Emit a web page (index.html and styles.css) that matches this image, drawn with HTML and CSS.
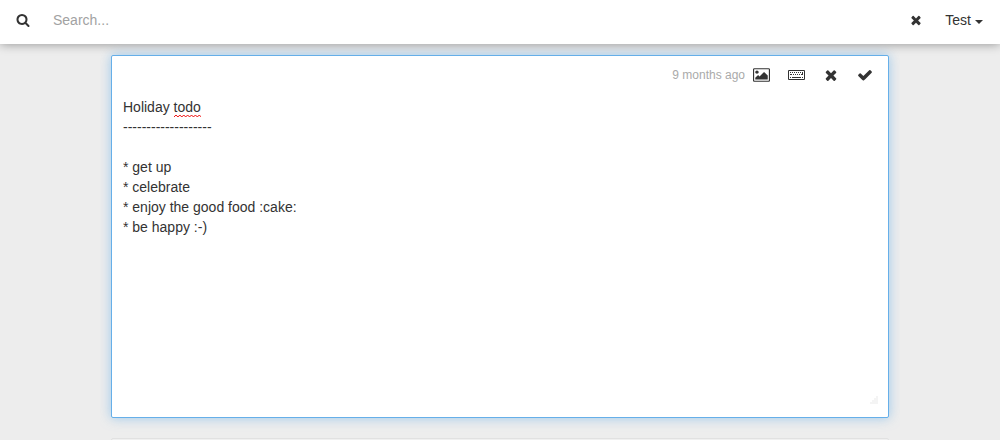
FILE: index.html
```html
<!DOCTYPE html>
<html lang="en">
<head>
    <meta charset="UTF-8">
    <meta name="viewport" content="width=device-width, initial-scale=1.0">
    <title>Notes</title>
    <link rel="stylesheet" href="styles.css">
</head>
<body>
    <header class="navbar">
        <label class="search-label" for="search" aria-label="Search">
            <svg class="icon icon-small" viewBox="0 0 1792 1792"><path d="M1216 832q0-185-131.5-316.5t-316.5-131.5-316.5 131.5-131.5 316.5 131.5 316.5 316.5 131.5 316.5-131.5 131.5-316.5zm512 832q0 52-38 90t-90 38q-54 0-90-38l-343-342q-179 124-399 124-143 0-273.5-55.5t-225-150-150-225-55.5-273.5 55.5-273.5 150-225 225-150 273.5-55.5 273.5 55.5 225 150 150 225 55.5 273.5q0 220-124 399l343 343q37 37 37 90z"/></svg>
        </label>
        <input class="search-input" type="text" id="search" placeholder="Search...">
        <button class="icon-button" type="button" id="clearSearch" aria-label="Clear search">
            <svg class="icon icon-small" viewBox="0 0 1792 1792"><path d="M1490 1322q0 40-28 68l-136 136q-28 28-68 28t-68-28l-294-294-294 294q-28 28-68 28t-68-28l-136-136q-28-28-28-68t28-68l294-294-294-294q-28-28-28-68t28-68l136-136q28-28 68-28t68 28l294 294 294-294q28-28 68-28t68 28l136 136q28 28 28 68t-28 68l-294 294 294 294q28 28 28 68z"/></svg>
        </button>
        <button class="user-menu" type="button" aria-haspopup="true">Test<span class="caret"></span></button>
    </header>

    <main class="notes">
        <article class="note note-editing">
            <div class="toolbar">
                <span class="note-date">9 months ago</span>
                <button class="icon-button" type="button" aria-label="Insert image">
                    <svg class="icon icon-wide" viewBox="-64 0 1920 1792"><path d="M576 576q0 80-56 136t-136 56-136-56-56-136 56-136 136-56 136 56 56 136zm1024 384v448h-1408v-192l320-320 160 160 512-512zm96-704h-1600q-13 0-22.5 9.5t-9.5 22.5v1216q0 13 9.5 22.5t22.5 9.5h1600q13 0 22.5-9.5t9.5-22.5v-1216q0-13-9.5-22.5t-22.5-9.5zm160 32v1216q0 66-47 113t-113 47h-1600q-66 0-113-47t-47-113v-1216q0-66 47-113t113-47h1600q66 0 113 47t47 113z"/></svg>
                </button>
                <button class="icon-button" type="button" aria-label="Keyboard shortcuts">
                    <svg class="icon icon-wide" viewBox="0 0 17 16">
                        <path fill-rule="evenodd" d="M1 3h15a1 1 0 0 1 1 1v8a1 1 0 0 1-1 1h-15a1 1 0 0 1-1-1v-8a1 1 0 0 1 1-1zM1 4v8h15v-8z"/>
                        <path d="M2 5h1v1h-1zM4 5h1v1h-1zM6 5h1v1h-1zM8 5h1v1h-1zM10 5h1v1h-1zM12 5h1v1h-1zM14 5h1v3h-2v-1h1zM2 7h2v1h-2zM5 7h1v1h-1zM7 7h1v1h-1zM9 7h1v1h-1zM11 7h1v1h-1zM2 10h1v1h-1zM4 10h9v1h-9zM14 10h1v1h-1z"/>
                    </svg>
                </button>
                <button class="icon-button" type="button" aria-label="Cancel">
                    <svg class="icon" viewBox="0 0 1792 1792"><path d="M1490 1322q0 40-28 68l-136 136q-28 28-68 28t-68-28l-294-294-294 294q-28 28-68 28t-68-28l-136-136q-28-28-28-68t28-68l294-294-294-294q-28-28-28-68t28-68l136-136q28-28 68-28t68 28l294 294 294-294q28-28 68-28t68 28l136 136q28 28 28 68t-28 68l-294 294 294 294q28 28 28 68z"/></svg>
                </button>
                <button class="icon-button" type="button" aria-label="Save">
                    <svg class="icon" viewBox="0 0 1792 1792"><path d="M1671 566q0 40-28 68l-724 724-136 136q-28 28-68 28t-68-28l-136-136-362-362q-28-28-28-68t28-68l136-136q28-28 68-28t68 28l294 295 656-657q28-28 68-28t68 28l136 136q28 28 28 68z"/></svg>
                </button>
            </div>
            <div class="editor">
                <!-- Spelling marks, laid under the text -->
                <div class="spelling" id="spelling" aria-hidden="true">Holiday <span class="misspelled">todo<svg class="squiggle" viewBox="0 0 28 4"><path d="M0 3L2 1L4 3L6 1L8 3L10 1L12 3L14 1L16 3L18 1L20 3L22 1L24 3L26 1L28 3"/></svg></span></div>
                <textarea class="editor-text" id="note" rows="15" spellcheck="false" aria-label="Note text">Holiday todo
-------------------

* get up
* celebrate
* enjoy the good food :cake:
* be happy :-)</textarea>
                <svg class="grip" viewBox="0 0 8 8"><path d="M8 0v8h-8v-2h2v-2h2v-2h2v-2z"/></svg>
            </div>
        </article>
        <article class="note note-next"></article>
    </main>

    <script>
        const search = document.getElementById('search');
        const note = document.getElementById('note');

        document.getElementById('clearSearch').addEventListener('click', () => {
            search.value = '';
            search.focus();
        });

        // The marks no longer fit once the text is edited
        note.addEventListener('input', () => {
            document.getElementById('spelling').style.display = 'none';
        });
    </script>
</body>
</html>
```
FILE: styles.css
```css
/* Base */
* {
    box-sizing: border-box;
}
body {
    margin: 0;
    min-height: 100vh;
    overflow-x: hidden;
    background: #ededed;
    color: #333;
    font-family: "Liberation Sans", Arial, sans-serif;
    font-size: 14px;
    line-height: 20px;
}
button,
input,
textarea {
    margin: 0;
    padding: 0;
    border: none;
    outline: none;
    background: transparent;
    color: inherit;
    font: inherit;
}
button {
    cursor: pointer;
}

/* Icons */
.icon {
    display: block;
    width: 16px;
    height: 16px;
    fill: #333;
}
.icon-small {
    width: 14px;
    height: 14px;
}
.icon-wide {
    width: 17px;
}

/* Navbar */
.navbar {
    position: relative;
    display: flex;
    align-items: center;
    height: 44px;
    padding: 0 17px 4px 16px;
    background: #fff;
    box-shadow: 0 0 10px rgba(0, 0, 0, 0.4);
}
.search-input {
    flex: 1;
    min-width: 0;
    margin-left: 23px;
}
.search-input::placeholder {
    color: #a2a2a2;
    opacity: 1;
}
.user-menu {
    display: flex;
    align-items: center;
    margin-left: 22px;
}
.caret {
    margin: 3px 0 0 4px;
    border-top: 4px solid #333;
    border-right: 4px solid transparent;
    border-left: 4px solid transparent;
}

/* Notes */
.notes {
    max-width: 800px;
    height: calc(100vh - 44px);
    margin: 0 auto;
    padding: 11px 11px 0;
    overflow: hidden;
}
.note {
    border: 1px solid #e1e1e1;
    border-radius: 2px;
    background: #fff;
}
.note-editing {
    border-color: #66afe9;
    box-shadow: 0 0 12px rgba(102, 175, 233, 0.6);
}
.note-next {
    height: 80px;
    margin-top: 20px;
    background: #f0f0f0;
}

/* Toolbar */
.toolbar {
    display: flex;
    align-items: center;
    justify-content: flex-end;
    gap: 18px;
    padding: 9px 15px 0 11px;
}
.note-date {
    margin-right: -10px;
    color: #aaa;
    font-size: 12px;
}

/* Editor */
.editor {
    position: relative;
    padding: 12px 11px;
}
.editor-text {
    display: block;
    position: relative;
    width: 100%;
    height: 308px;
    resize: none;
}
.spelling {
    position: absolute;
    top: 12px;
    left: 11px;
    color: transparent;
    white-space: pre;
}
.misspelled {
    display: inline-block;
    position: relative;
}
.squiggle {
    position: absolute;
    bottom: -1px;
    left: 0;
    width: 100%;
    height: 4px;
    fill: none;
    stroke: #e00;
}
.grip {
    position: absolute;
    right: 10px;
    bottom: 13px;
    width: 8px;
    height: 8px;
    fill: #f4f4f4;
}
```
